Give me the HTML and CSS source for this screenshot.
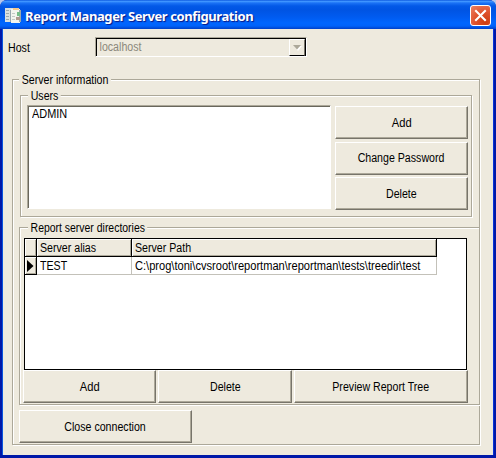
FILE: index.html
```html
<!DOCTYPE html>
<html lang="en">
<head>
<meta charset="utf-8">
<title>Report Manager Server configuration</title>
<link rel="stylesheet" href="styles.css">
</head>
<body>
<main class="window">
  <header class="titlebar">
    <svg class="app-icon" width="17" height="17" viewBox="0 0 17 17">
      <path fill="#d9dfdf" d="M0 1h8v14H0z"/><path fill="#f3f4ee" d="M6 2h9v14H6z"/>
      <path fill="#9aa8ae" d="M1 3h3v1H1zM1 6h3v1H1zM1 9h3v1H1zM1 12h3v1H1zM5 3h1v12H5zM14 3h2v12h-2z"/>
      <path fill="#f5c98c" d="M8 1h6v2H8z"/><path fill="#76bd89" d="M12 5h3v4h-3z"/><path fill="#b09a90" d="M11 10h4v3h-4z"/><path fill="#c3c9c5" d="M7 6h3v1H7zM7 9h3v1H7zM7 12h3v1H7z"/>
    </svg>
    <h1 class="title">Report Manager Server configuration</h1>
    <button class="close" aria-label="Close"><svg width="21" height="21" viewBox="0 0 21 21"><path d="M6 6l9 9M15 6L6 15" stroke="#fff" stroke-width="2.1" stroke-linecap="square"/></svg></button>
  </header>
  <div class="client">
    <div class="host-row">
      <span class="host-label"><span class="text">Host</span></span>
      <div class="combo"><span class="combo-text text">localhost</span><span class="combo-arrow"><svg width="9" height="6" viewBox="0 0 9 6"><path d="M1 1h8L5 6z" fill="#fff"/><path d="M0 0h8L4 4.500z" fill="#aca899"/></svg></span></div>
    </div>
    <section class="group server">
      <span class="legend server-legend text">Server information</span>
      <section class="group users">
        <span class="legend users-legend text">Users</span>
        <div class="users-body">
          <div class="listbox"><span class="text admin">ADMIN</span></div>
          <div class="user-buttons">
            <button class="btn"><span class="text short">Add</span></button>
            <button class="btn"><span class="text">Change Password</span></button>
            <button class="btn"><span class="text">Delete</span></button>
          </div>
        </div>
      </section>
      <section class="group dirs">
        <span class="legend dirs-legend text">Report server directories</span>
        <div class="grid">
          <div class="row head"><span class="cell"></span><span class="cell"><span class="text">Server alias</span></span><span class="cell"><span class="text">Server Path</span></span></div>
          <div class="row"><span class="cell marker"><svg width="7" height="12" viewBox="0 0 7 12"><path d="M0 0l6.500 6L0 12z"/></svg></span><span class="cell"><span class="text">TEST</span></span><span class="cell"><span class="text path">C:\prog\toni\cvsroot\reportman\reportman\tests\treedir\test</span></span></div>
        </div>
        <div class="dir-buttons">
          <button class="btn"><span class="text short">Add</span></button>
          <button class="btn"><span class="text">Delete</span></button>
          <button class="btn"><span class="text">Preview Report Tree</span></button>
        </div>
      </section>
      <button class="btn close-conn"><span class="text">Close connection</span></button>
    </section>
  </div>
</main>
</body>
</html>
```
FILE: styles.css
```css
* { box-sizing: border-box; }
body { margin: 0; background: #b5c7ec; font: 12px/14px "Liberation Sans", Arial, sans-serif; color: #000; overflow: hidden; }
button { font: inherit; color: inherit; padding: 0; margin: 0; border: 0; }
svg { display: block; }
.text { display: inline-block; transform: scaleX(.885); transform-origin: 0 50%; white-space: nowrap; }
.btn .text { transform-origin: 50% 50%; }
.window { width: 496px; height: 458px; border-radius: 7px 7px 0 0; background: #0018a8; display: flex; flex-direction: column; overflow: hidden; }
.titlebar { flex: none; height: 29px; display: flex; align-items: flex-start; padding: 5px 5px 0 5px;
  background: linear-gradient(#0f5be0 0, #3e94ff 1.500px, #1b72f5 3px, #0359e7 6px, #0054e3 10px, #005bf0 17px, #0066ff 23px, #0062fa 26px, #0040c8 29px); }
.app-icon { margin-top: 2px; }
.title { margin: 3px 0 0 3px; flex: 1; font: bold 13px/16px "Noto Sans", sans-serif; letter-spacing: -.4px; color: #fff; text-shadow: 1px 1px 1px #0a1883; white-space: nowrap; }
.close { width: 21px; height: 21px; border: 1px solid #fff; border-radius: 3px; background: radial-gradient(circle at 75% 85%, #cc3c10, #e0542f 50%, #ec8265); }
.close svg { margin: -1px; }
.client { flex: 1; margin: 0 3px 3px 3px; background: #eeeade; padding: 8px 13px 0 5px; box-shadow: -1px 0 #0855dd, 1px 0 #0831d9; }
.host-row { display: flex; height: 20px; }
.host-label { width: 87px; padding-top: 4px; }
.combo { width: 212px; height: 20px; display: flex; justify-content: space-between; border: 1px solid; border-color: #aca899 #fff #fff #aca899; box-shadow: inset 1px 1px #000, inset -1px 0 #000; color: #8b887b; }
.combo-text { padding: 2px 0 0 4px; }
.combo-arrow { width: 16px; height: 17px; margin: 1px 1px 0 0; display: flex; align-items: center; justify-content: center; border: 1px solid; border-color: #fff #77746a #000 #fff; }
.group { position: relative; border: 1px solid #aca899; box-shadow: 1px 1px #fff, inset 1px 1px #fff; white-space: nowrap; }
.legend { display: block; width: max-content; height: 14px; margin-top: -7px; padding: 0 3px; background: #eeeade; }
.server { width: 468px; height: 366px; margin: 22px 0 0 4px; }
.server-legend { margin-left: 6px; }
.users { width: 452px; height: 122px; margin: 8px 0 0 7px; }
.users-legend { margin-left: 7px; }
.users-body { display: flex; gap: 4px; padding: 2px 0 0 6px; }
.listbox { width: 304px; height: 104px; background: #fff; border: 1px solid; border-color: #aca899 #fff #fff #aca899; box-shadow: inset 1px 1px #69675c; padding: 1px 0 0 4px; }
.admin { transform: scaleX(.91); }
.user-buttons { display: flex; flex-direction: column; gap: 2.500px; padding-top: 1px; width: 133px; }
.btn { height: 33px; background: #eeeade; border: 1px solid; border-color: #fff #77746a #77746a #fff; box-shadow: inset -1px -1px #aca899; text-align: center; }
.short { transform: scaleX(.93); }
.dirs { width: 461px; height: 178px; margin: 10px 0 0 6px; }
.dirs-legend { margin-left: 8px; transform: scaleX(.87); }
.grid { width: 443px; height: 132px; margin: 3px 0 0 4px; border: 1px solid #000; background: #fff; }
.row { display: grid; grid-template-columns: 12px 95px 305px; width: 412px; height: 18px; }
.cell { min-width: 0; border-right: 1px solid #c3c1b9; border-bottom: 1px solid #c3c1b9; padding: 2px 0 0 3px; }
.path { transform: scaleX(.924); }
.head .cell, .marker { background: #eeeade; border-color: #000; box-shadow: inset 1px 1px #fff, inset -1px -1px #aca899; }
.marker { padding: 3px 0 0 2px; }
.dir-buttons { display: grid; grid-template-columns: 133px 134px 174px; gap: 2px; margin: 0 0 0 3px; }
.close-conn { display: block; width: 173px; margin: 5px 0 0 6px; }
```
